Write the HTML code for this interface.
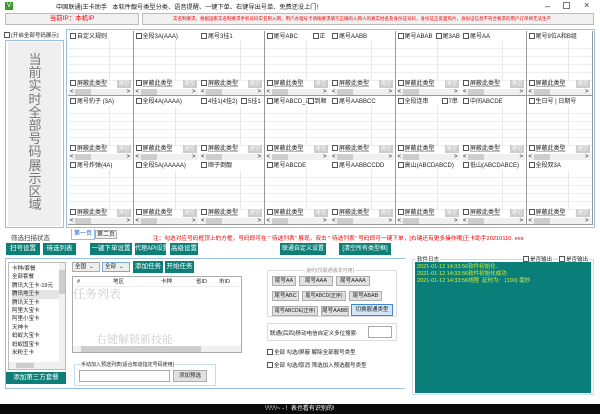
<!DOCTYPE html>
<html><head><meta charset="utf-8"><style>
*{margin:0;padding:0;box-sizing:border-box}
body{width:600px;height:414px;overflow:hidden;background:#fff;font-family:"Liberation Sans","Noto Sans CJK SC",sans-serif;font-size:7px;color:#222;position:relative;white-space:nowrap}
.a{position:absolute}
.cb{display:inline-block;width:6px;height:6px;border:1px solid #555;background:#fff;vertical-align:-1px;margin-right:1px}
.c{position:absolute;width:66px;height:65px;border-right:1px solid #999;border-bottom:1px solid #999;background:#fff;overflow:hidden;
background-image:repeating-linear-gradient(to bottom,transparent 0,transparent 7px,#eee 7px,#eee 8px),linear-gradient(to right,transparent 41px,#e8e8e8 41px,#e8e8e8 42px,transparent 42px);background-size:100% 40px,100% 40px;background-repeat:no-repeat;background-position:0 10px,0 10px}
.c .t{position:absolute;left:2px;top:2px;font-size:6px;line-height:8px}
.c .t2{position:absolute;top:2px;font-size:6px;line-height:8px;background:#fff}
.c .b{position:absolute;left:2px;top:49px;font-size:6px;line-height:8px;text-decoration:underline;text-decoration-color:#bbb}
.c .q{position:absolute;right:2px;top:49px;width:14px;height:8px;background:#ccc;color:#fff;font-size:5.5px;text-align:center;line-height:8px}
.c .s{position:absolute;left:1px;right:1px;top:58px;height:6px;background:#f0f0f0;font-size:6px;line-height:6px}
.c .s i{position:absolute;left:6px;top:0;width:16px;height:6px;background:#cdcdcd}
.c .s span{position:absolute;left:1px}.c .s em{position:absolute;right:2px;font-style:normal}
.tb{position:absolute;background:#0e7f78;color:#fff;font-size:6.5px;text-align:center;line-height:12px;height:12px;overflow:hidden}
.gb{position:absolute;background:#e1e1e1;border:1px solid #adadad;font-size:5.5px;text-align:center;line-height:8px;height:10px;overflow:hidden}
</style></head><body>
<div class="a" style="left:5px;top:2px;width:8px;height:8px;background:#3a9a2a;color:#fff;font-size:6px;text-align:center;line-height:8px">V</div>
<div class="a" style="left:56px;top:2px;font-size:6.2px">中国联通|王卡助手 &nbsp; 本软件靓号类型分类、语音提醒、一键下单、右键导出号单、免费还没上门!</div>
<div class="a" style="left:545px;top:1px;font-size:9px;color:#333">–</div>
<div class="a" style="left:563px;top:2px;width:7px;height:7px;border:1px solid #777"></div>
<div class="a" style="left:584px;top:0px;font-size:9px;color:#333">×</div>
<div class="a" style="left:5px;top:13px;width:134px;height:12px;background:#f0f0f0;border:1px solid #bbb;color:#e00;font-size:6.5px;text-align:center;line-height:10px">当前IP：本机IP</div>
<div class="a" style="left:142px;top:13px;width:452px;height:12px;background:#f0f0f0;border:1px solid #bbb;color:#e00;font-size:4.5px;line-height:10px;padding-left:30px;overflow:hidden">实名制要求，根据国家实名制要求手机号码实名制入网，用户办理号卡请按要求填写正确的入网人的真实姓名及身份证号码，身份证正反面照片，身份证信息不符合要求的用户订单将无法生产</div>
<div class="a" style="left:4px;top:31px;font-size:5.5px"><span class="cb"></span>(开启全部号码展示)</div>
<div class="a" style="left:5px;top:40px;width:59px;height:188px;border:1px solid #9cc0e0;background:#fff"></div>
<div class="a" style="left:8px;top:42px;width:53px;height:184px;background:#efefef"></div>
<div class="a" style="left:27px;top:53px;width:16px;font-size:13px;line-height:13.2px;color:#777;text-align:center;white-space:normal">当前实时全部号码展示区域</div>
<div class="a" style="left:66px;top:29px;width:529px;height:199px;border:1px solid #9cc0e0"></div>
<div class="a" style="left:68px;top:31px;width:525px;height:195px">
<div class="c" style="left:0;top:0"><div class="t"><span class="cb"></span>自定义规则</div><div class="b"><span class="cb"></span>屏蔽此类型</div><div class="q">清空</div><div class="s"><span>&lt;</span><i></i><em>&gt;</em></div></div>
<div class="c" style="left:65.5px;top:0"><div class="t"><span class="cb"></span>全段3A(AAA)</div><div class="b"><span class="cb"></span>屏蔽此类型</div><div class="q">清空</div><div class="s"><span>&lt;</span><i></i><em>&gt;</em></div></div>
<div class="c" style="left:131px;top:0"><div class="t"><span class="cb"></span>尾号3挂1</div><div class="b"><span class="cb"></span>屏蔽此类型</div><div class="q">清空</div><div class="s"><span>&lt;</span><i></i><em>&gt;</em></div></div>
<div class="c" style="left:196.5px;top:0"><div class="t"><span class="cb"></span>尾号ABC</div><div class="t2" style="left:48px"><span class="cb"></span>正</div><div class="b"><span class="cb"></span>屏蔽此类型</div><div class="q">清空</div><div class="s"><span>&lt;</span><i></i><em>&gt;</em></div></div>
<div class="c" style="left:262px;top:0"><div class="t"><span class="cb"></span>尾号AABB</div><div class="b"><span class="cb"></span>屏蔽此类型</div><div class="q">清空</div><div class="s"><span>&lt;</span><i></i><em>&gt;</em></div></div>
<div class="c" style="left:327.5px;top:0"><div class="t"><span class="cb"></span>尾号ABAB</div><div class="t2" style="left:40px"><span class="cb"></span>尾3AB</div><div class="b"><span class="cb"></span>屏蔽此类型</div><div class="q">清空</div><div class="s"><span>&lt;</span><i></i><em>&gt;</em></div></div>
<div class="c" style="left:393px;top:0"><div class="t"><span class="cb"></span>尾号AA</div><div class="b"><span class="cb"></span>屏蔽此类型</div><div class="q">清空</div><div class="s"><span>&lt;</span><i></i><em>&gt;</em></div></div>
<div class="c" style="left:458.5px;top:0"><div class="t"><span class="cb"></span>尾号9位A和B组</div><div class="b"><span class="cb"></span>屏蔽此类型</div><div class="q">清空</div><div class="s"><span>&lt;</span><i></i><em>&gt;</em></div></div>
<div class="c" style="left:0;top:64.5px"><div class="t"><span class="cb"></span>尾号豹子 (3A)</div><div class="b"><span class="cb"></span>屏蔽此类型</div><div class="q">清空</div><div class="s"><span>&lt;</span><i></i><em>&gt;</em></div></div>
<div class="c" style="left:65.5px;top:64.5px"><div class="t"><span class="cb"></span>全段4A(AAAA)</div><div class="b"><span class="cb"></span>屏蔽此类型</div><div class="q">清空</div><div class="s"><span>&lt;</span><i></i><em>&gt;</em></div></div>
<div class="c" style="left:131px;top:64.5px"><div class="t"><span class="cb"></span>4挂1(4挂2)</div><div class="t2" style="left:42px"><span class="cb"></span>5挂1</div><div class="b"><span class="cb"></span>屏蔽此类型</div><div class="q">清空</div><div class="s"><span>&lt;</span><i></i><em>&gt;</em></div></div>
<div class="c" style="left:196.5px;top:64.5px"><div class="t"><span class="cb"></span>尾号ABCD_正</div><div class="t2" style="left:43px"><span class="cb"></span>到顺</div><div class="b"><span class="cb"></span>屏蔽此类型</div><div class="q">清空</div><div class="s"><span>&lt;</span><i></i><em>&gt;</em></div></div>
<div class="c" style="left:262px;top:64.5px"><div class="t"><span class="cb"></span>尾号AABBCC</div><div class="b"><span class="cb"></span>屏蔽此类型</div><div class="q">清空</div><div class="s"><span>&lt;</span><i></i><em>&gt;</em></div></div>
<div class="c" style="left:327.5px;top:64.5px"><div class="t"><span class="cb"></span>全段连串</div><div class="t2" style="left:46px"><span class="cb"></span>7串</div><div class="b"><span class="cb"></span>屏蔽此类型</div><div class="q">清空</div><div class="s"><span>&lt;</span><i></i><em>&gt;</em></div></div>
<div class="c" style="left:393px;top:64.5px"><div class="t"><span class="cb"></span>中间ABCDE</div><div class="b"><span class="cb"></span>屏蔽此类型</div><div class="q">清空</div><div class="s"><span>&lt;</span><i></i><em>&gt;</em></div></div>
<div class="c" style="left:458.5px;top:64.5px"><div class="t"><span class="cb"></span>生日号 | 日期号</div><div class="b"><span class="cb"></span>屏蔽此类型</div><div class="q">清空</div><div class="s"><span>&lt;</span><i></i><em>&gt;</em></div></div>
<div class="c" style="left:0;top:129px"><div class="t"><span class="cb"></span>尾号炸弹(4A)</div><div class="b"><span class="cb"></span>屏蔽此类型</div><div class="q">清空</div><div class="s"><span>&lt;</span><i></i><em>&gt;</em></div></div>
<div class="c" style="left:65.5px;top:129px"><div class="t"><span class="cb"></span>全段5A(AAAAA)</div><div class="b"><span class="cb"></span>屏蔽此类型</div><div class="q">清空</div><div class="s"><span>&lt;</span><i></i><em>&gt;</em></div></div>
<div class="c" style="left:131px;top:129px"><div class="t"><span class="cb"></span>顺子倒靓</div><div class="b"><span class="cb"></span>屏蔽此类型</div><div class="q">清空</div><div class="s"><span>&lt;</span><i></i><em>&gt;</em></div></div>
<div class="c" style="left:196.5px;top:129px"><div class="t"><span class="cb"></span>尾号ABCDE</div><div class="b"><span class="cb"></span>屏蔽此类型</div><div class="q">清空</div><div class="s"><span>&lt;</span><i></i><em>&gt;</em></div></div>
<div class="c" style="left:262px;top:129px"><div class="t"><span class="cb"></span>尾号AABBCCDD</div><div class="b"><span class="cb"></span>屏蔽此类型</div><div class="q">清空</div><div class="s"><span>&lt;</span><i></i><em>&gt;</em></div></div>
<div class="c" style="left:327.5px;top:129px"><div class="t"><span class="cb"></span>高山(ABCDABCD)</div><div class="b"><span class="cb"></span>屏蔽此类型</div><div class="q">清空</div><div class="s"><span>&lt;</span><i></i><em>&gt;</em></div></div>
<div class="c" style="left:393px;top:129px"><div class="t"><span class="cb"></span>低山(ABCDABCE)</div><div class="b"><span class="cb"></span>屏蔽此类型</div><div class="q">清空</div><div class="s"><span>&lt;</span><i></i><em>&gt;</em></div></div>
<div class="c" style="left:458.5px;top:129px"><div class="t"><span class="cb"></span>全段双3A</div><div class="b"><span class="cb"></span>屏蔽此类型</div><div class="q">清空</div><div class="s"><span>&lt;</span><i></i><em>&gt;</em></div></div>
</div>
<div class="a" style="left:11px;top:232px;font-size:6.5px;color:#444">筛选扫描状态</div>
<div class="a" style="left:71px;top:229px;width:24px;height:11px;border:1px solid #9cc0e0;border-top:none;background:#fff;color:#1a55c0;font-size:6px;text-align:center;line-height:10px">第一页</div>
<div class="a" style="left:95px;top:230px;width:22px;height:9px;border:1px solid #aaa;background:#f6f6f6;font-size:6px;text-align:center;line-height:8px">第二页</div>
<div class="a" style="left:153px;top:233px;color:#e00;font-size:5.7px">注：勾选对应号码框顶上的方框，号码即可在 " 待选列表" 展现，双击 " 待选列表" 号码即可一键下单，[右键还有更多操作哦]王卡助手20210110. exe</div>
<div class="tb" style="left:6px;top:243px;width:34px">扫号设置</div>
<div class="tb" style="left:43px;top:243px;width:33px">待选列表</div>
<div class="tb" style="left:90px;top:243px;width:42px">一键下单设置</div>
<div class="tb" style="left:135px;top:243px;width:31px;font-size:6px">代理API设置</div>
<div class="tb" style="left:170px;top:243px;width:28px">高级设置</div>
<div class="tb" style="left:280px;top:243px;width:46px;font-size:6px">联通自定义设置</div>
<div class="tb" style="left:339px;top:243px;width:52px;font-size:6px">[清空所有类型框]</div>
<div class="a" style="left:5px;top:258px;width:400px;height:131px;border-left:1px solid #9cc0e0;border-top:1px solid #9cc0e0;border-bottom:1px solid #9cc0e0"></div>
<div class="a" style="left:8px;top:262px;width:58px;height:108px;border:1px solid #bbb;background:#fff;font-size:5.5px;line-height:8.4px;padding:2px 0 0 3px;overflow:hidden">
<div>卡种/套餐</div><div>全部套餐</div><div>腾讯大王卡-19元</div><div style="background:#e4e4e4">腾讯地王卡</div><div>腾讯天王卡</div><div>阿里大宝卡</div><div>阿里小宝卡</div><div>天神卡</div><div>蚂蚁大宝卡</div><div>蚂蚁国宝卡</div><div>米粉王卡</div></div>
<div class="a" style="left:59px;top:263px;width:6px;height:100px;background:#f0f0f0"></div>
<div class="a" style="left:59px;top:270px;width:6px;height:24px;background:#cdcdcd"></div>
<div class="a" style="left:9px;top:362px;width:56px;height:7px;background:#f0f0f0"></div>
<div class="a" style="left:16px;top:363px;width:18px;height:5px;background:#cdcdcd"></div>
<div class="tb" style="left:6px;top:372px;width:60px;height:12px">添加第三方套餐</div>
<div class="a" style="left:72px;top:262px;width:28px;height:10px;border:1px solid #aaa;background:#eee;font-size:5.5px;line-height:8px;padding-left:2px">全国 &nbsp;⌄</div>
<div class="a" style="left:102px;top:262px;width:28px;height:10px;border:1px solid #7aa7d6;background:#eee;font-size:5.5px;line-height:8px;padding-left:2px">全部 &nbsp;⌄</div>
<div class="tb" style="left:133px;top:261px;width:30px;height:12px">添加任务</div>
<div class="tb" style="left:165px;top:261px;width:29px;height:12px">开始任务</div>
<div class="a" style="left:72px;top:276px;width:170px;height:77px;border:1px solid #aaa;background:#fff"></div>
<div class="a" style="left:73px;top:277px;width:168px;height:10px;font-size:5.5px;line-height:10px;border-bottom:1px solid #eee">
<span class="a" style="left:4px">#</span><span class="a" style="left:40px">地区</span><span class="a" style="left:88px">卡种</span><span class="a" style="left:123px">省ID</span><span class="a" style="left:146px">市ID</span></div>
<div class="a" style="left:73px;top:285px;font-family:'Noto Serif CJK SC',serif;font-size:12px;color:#ccc">任务列表</div>
<div class="a" style="left:96px;top:331px;font-family:'Noto Serif CJK SC',serif;font-size:11px;color:#ccc">右键解锁新技能</div>
<div class="a" style="left:73px;top:346px;width:168px;height:6px;background:#f0f0f0"></div>
<div class="a" style="left:81px;top:346px;width:120px;height:6px;background:#cdcdcd"></div>
<div class="a" style="left:74px;top:364px;width:142px;height:22px;border:1px solid #c8dcee"></div>
<div class="a" style="left:80px;top:361px;background:#fff;font-size:5px;padding:0 1px">手动加入预选列表(适合知道指定号码使用)</div>
<div class="a" style="left:79px;top:370px;width:91px;height:12px;border:1px solid #aaa;background:#fff"></div>
<div class="gb" style="left:173px;top:370px;width:34px;height:12px;line-height:10px">添加预选</div>
<div class="a" style="left:267px;top:270px;width:130px;height:47px;border:1px solid #ddd"></div>
<div class="a" style="left:305px;top:267px;background:#fff;font-size:5px;color:#999;padding:0 1px">速约(仅联通版本可用)</div>
<div class="gb" style="left:272px;top:276px;width:24px">尾号AA</div>
<div class="gb" style="left:299px;top:276px;width:34px">尾号AAA</div>
<div class="gb" style="left:336px;top:276px;width:34px">尾号AAAA</div>
<div class="gb" style="left:272px;top:291px;width:27px">尾号ABC</div>
<div class="gb" style="left:302px;top:291px;width:44px;font-size:5px">尾号ABCD(正序)</div>
<div class="gb" style="left:349px;top:291px;width:33px">尾号ABAB</div>
<div class="gb" style="left:272px;top:306px;width:46px;font-size:5px">尾号ABCDE(正序)</div>
<div class="gb" style="left:321px;top:306px;width:28px">尾号AABB</div>
<div class="gb" style="left:351px;top:304px;width:42px;height:12px;line-height:10px;background:#d4e6f8;border-color:#3c8ad8">切换靓通类型</div>
<div class="a" style="left:267px;top:323px;width:130px;height:18px;border:1px solid #ddd"></div>
<div class="a" style="left:270px;top:329px;font-size:5.5px">联通(后四)移动电信自定义多位搜索:</div>
<div class="a" style="left:368px;top:326px;width:24px;height:12px;border:1px solid #aaa;background:#fff"></div>
<div class="a" style="left:267px;top:348px;font-size:5.5px"><span class="cb"></span>全部 勾选/屏蔽 解除全部靓号类型</div>
<div class="a" style="left:267px;top:361px;font-size:5.5px"><span class="cb"></span>全部 勾选/取消 筛选加入预选靓号类型</div>
<div class="a" style="left:412px;top:259px;width:182px;height:136px;border:1px solid #c8dcee"></div>
<div class="a" style="left:416px;top:255px;background:#fff;font-size:5.5px;padding:0 1px">软件日志</div>
<div class="a" style="left:522px;top:255px;background:#fff;font-size:5.5px;padding:0 1px"><span class="cb"></span>是否输出</div>
<div class="a" style="left:558px;top:255px;background:#fff;font-size:5.5px;padding:0 1px"><span class="cb"></span>是否输出</div>
<div class="a" style="left:415px;top:262px;width:176px;height:131px;background:#0a7f79;color:#d6ec3a;font-size:5.5px;line-height:7px;padding:2px 2px">2021-01-12 14:33:56软件初始化..<br>2021-01-12 14:33:56软件初始化成功.<br>2021-01-12 14:33:56线程 &nbsp;延时为: &nbsp; (100) 毫秒</div>
<div class="a" style="left:0;top:404px;width:600px;height:10px;background:#0a0a0a;color:#fff;font-size:6px;line-height:10px;padding-left:265px">ﾘﾘﾘﾘ~ - ! &nbsp;表也看有识别的!</div>
</body></html>
